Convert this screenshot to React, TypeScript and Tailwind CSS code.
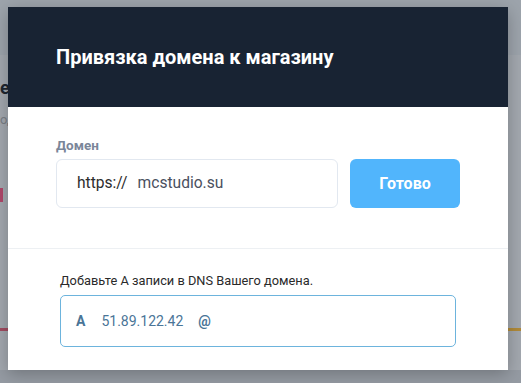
export default function App() {
  return (
    <div
      className="relative w-[521px] h-[383px] overflow-hidden bg-[#a3a8af]"
      style={{ fontFamily: "Roboto, 'Liberation Sans', sans-serif" }}
    >
      {/* background page under overlay */}
      <div className="flex flex-col h-full">
        <div className="h-[55px] bg-[#9da4ac]" />
        <div className="pl-0 pt-[24px] text-[18px] font-bold text-[#1e2630] leading-none">ец</div>
        <div className="pt-[16px] text-[13px] text-[#7a7f86] leading-none">од</div>
        <div className="mt-[62px] w-[3px] h-[14px] bg-[#b0476a]" />
        <div className="mt-[126px] flex justify-between">
          <div className="w-[10px] h-[3px] bg-[#a14d62]" />
          <div className="w-[16px] h-[3px] bg-[#b08a3a]" />
        </div>
        <div className="mt-auto h-[13px] bg-[#959ba3]" />
      </div>

      {/* modal */}
      <div className="absolute left-[8px] top-[7px] w-[500px] bg-white shadow-[0_4px_16px_rgba(0,0,0,0.25)]">
        <div className="h-[100px] bg-[#182333] flex items-center px-[48px]">
          <h2 className="text-white font-bold text-[20px]">Привязка домена к магазину</h2>
        </div>

        <div className="px-[48px] pt-[30px] pb-[40px]">
          <div className="text-[13.5px] font-bold text-[#7a8699] mb-[6px] leading-[16px]">Домен</div>
          <div className="flex gap-[12px]">
            <div className="w-[282px] h-[49px] border border-[#e2e8f0] rounded-[6px] flex items-center pl-[20px] text-[15.6px]">
              <span className="text-[#2d2d2d]">https://</span>
              <span className="ml-[10px] text-[#4a5060]">mcstudio.su</span>
            </div>
            <button className="w-[110px] h-[49px] rounded-[6px] bg-[#51b5fc] text-white font-bold text-[16px]">
              Готово
            </button>
          </div>
        </div>

        <div className="border-t border-[#edf0f3] px-[52px] pt-[24px] pb-[23px]">
          <div className="text-[12.8px] text-[#2a2a2a] leading-[16px] mb-[6px]">
            Добавьте A записи в DNS Вашего домена.
          </div>
          <div className="h-[52px] w-[396px] border border-[#6db4dd] rounded-[5px] flex items-center pl-[15px] text-[14px] text-[#4a7597]">
            <span className="font-bold">A</span>
            <span className="ml-[16px]">51.89.122.42</span>
            <span className="ml-[15px] font-bold">@</span>
          </div>
        </div>
      </div>
    </div>
  );
}
